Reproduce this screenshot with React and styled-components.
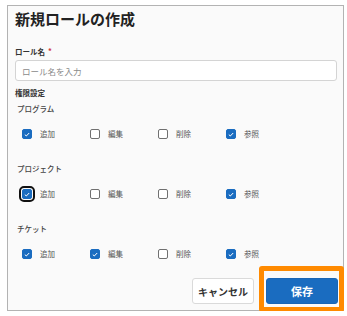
import styled, { createGlobalStyle } from "styled-components";

const GlobalStyle = createGlobalStyle`
  html, body {
    margin: 0;
    padding: 0;
    background: #ffffff;
  }
  body {
    font-family: "Noto Sans CJK JP", "Noto Sans", sans-serif;
    color: #222;
  }
`;

const sections = [
  { name: "プログラム", values: [true, false, false, true], focus: -1 },
  { name: "プロジェクト", values: [true, false, false, true], focus: 0 },
  { name: "チケット", values: [true, true, false, true], focus: -1 },
];

const actions = ["追加", "編集", "削除", "参照"];

export default function App() {
  return (
    <Page>
      <GlobalStyle />
      <Panel>
        <Title>新規ロールの作成</Title>
        <FieldLabel>
          ロール名<Required>*</Required>
        </FieldLabel>
        <Input placeholder="ロール名を入力" />
        <FieldLabel $top={6}>権限設定</FieldLabel>
        {sections.map((section, i) => (
          <Group key={section.name} $first={i === 0}>
            <GroupName>{section.name}</GroupName>
            <CheckRow>
              {actions.map((action, j) => (
                <CheckItem key={action}>
                  <Box $checked={section.values[j]} $focused={section.focus === j}>
                    {section.values[j] && (
                      <svg width="6" height="5" viewBox="0 0 6 5">
                        <path
                          d="M0.8 2.6 L2.3 4 L5.2 1"
                          fill="none"
                          stroke="#fff"
                          strokeWidth="1"
                        />
                      </svg>
                    )}
                  </Box>
                  <CheckText>{action}</CheckText>
                </CheckItem>
              ))}
            </CheckRow>
          </Group>
        ))}
        <Footer>
          <CancelButton>キャンセル</CancelButton>
          <SaveWrap>
            <SaveButton>保存</SaveButton>
            <Highlight />
          </SaveWrap>
        </Footer>
      </Panel>
    </Page>
  );
}

const Page = styled.div`
  padding: 5px 0 0 7px;
`;

const Panel = styled.div`
  box-sizing: border-box;
  width: 337px;
  height: 306px;
  border: 1px solid #b3b3b3;
  background: #fafafa;
  padding: 2px 6px 0 7px;
  display: flex;
  flex-direction: column;
`;

const Title = styled.h1`
  margin: 0;
  font-size: 15px;
  line-height: 22px;
  font-weight: 700;
  color: #222;
`;

const FieldLabel = styled.div`
  margin-top: ${(p) => (p.$top ?? 15)}px;
  font-size: 7.5px;
  line-height: 12px;
  font-weight: 700;
  color: #333;
`;

const Required = styled.span`
  color: #d0343a;
  margin-left: 3px;
  vertical-align: 1px;
`;

const Input = styled.input`
  box-sizing: border-box;
  margin-top: 2px;
  width: 100%;
  height: 21px;
  border: 1px solid #d4d4d4;
  border-radius: 3px;
  background: #fff;
  padding: 0 6px;
  font-family: inherit;
  font-size: 8.5px;
  outline: none;
  &::placeholder {
    color: #8a8a8a;
  }
`;

const Group = styled.div`
  margin-top: ${(p) => (p.$first ? 4 : 19)}px;
`;

const GroupName = styled.div`
  padding-left: 2px;
  font-size: 7.5px;
  line-height: 12px;
  font-weight: 500;
  color: #444;
`;

const CheckRow = styled.div`
  margin-top: 9px;
  height: 20px;
  padding-left: 7px;
  display: grid;
  grid-template-columns: repeat(4, 68px);
  align-items: center;
`;

const CheckItem = styled.label`
  display: flex;
  align-items: center;
  gap: 8px;
`;

const Box = styled.span`
  box-sizing: border-box;
  width: 10px;
  height: 10px;
  border-radius: 2px;
  display: flex;
  align-items: center;
  justify-content: center;
  background: ${(p) => (p.$checked ? "#1a6cc0" : "#fff")};
  border: 1px solid ${(p) => (p.$checked ? "#1a6cc0" : "#707070")};
  outline: ${(p) => (p.$focused ? "2px solid #111" : "none")};
  outline-offset: 1px;
`;

const CheckText = styled.span`
  font-size: 7.5px;
  line-height: 10px;
  color: #555;
`;

const Footer = styled.div`
  margin-top: 14px;
  display: flex;
  justify-content: flex-end;
  gap: 12px;
  margin-right: -1px;
`;

const BaseButton = styled.button`
  box-sizing: border-box;
  height: 26px;
  border-radius: 3px;
  font-family: inherit;
  font-weight: 700;
  cursor: pointer;
`;

const CancelButton = styled(BaseButton)`
  width: 62px;
  padding: 0;
  font-size: 10px;
  background: #fff;
  border: 1px solid #dadada;
  color: #333;
`;

const SaveWrap = styled.div`
  position: relative;
  display: flex;
`;

const SaveButton = styled(BaseButton)`
  width: 72px;
  font-size: 11px;
  background: #1a6cc0;
  border: 1px solid #1a66b5;
  color: #fff;
`;

const Highlight = styled.div`
  position: absolute;
  top: -12px;
  left: -7px;
  right: -6px;
  bottom: -8px;
  border: 5px solid #ff8a00;
  border-radius: 3px;
  pointer-events: none;
`;
